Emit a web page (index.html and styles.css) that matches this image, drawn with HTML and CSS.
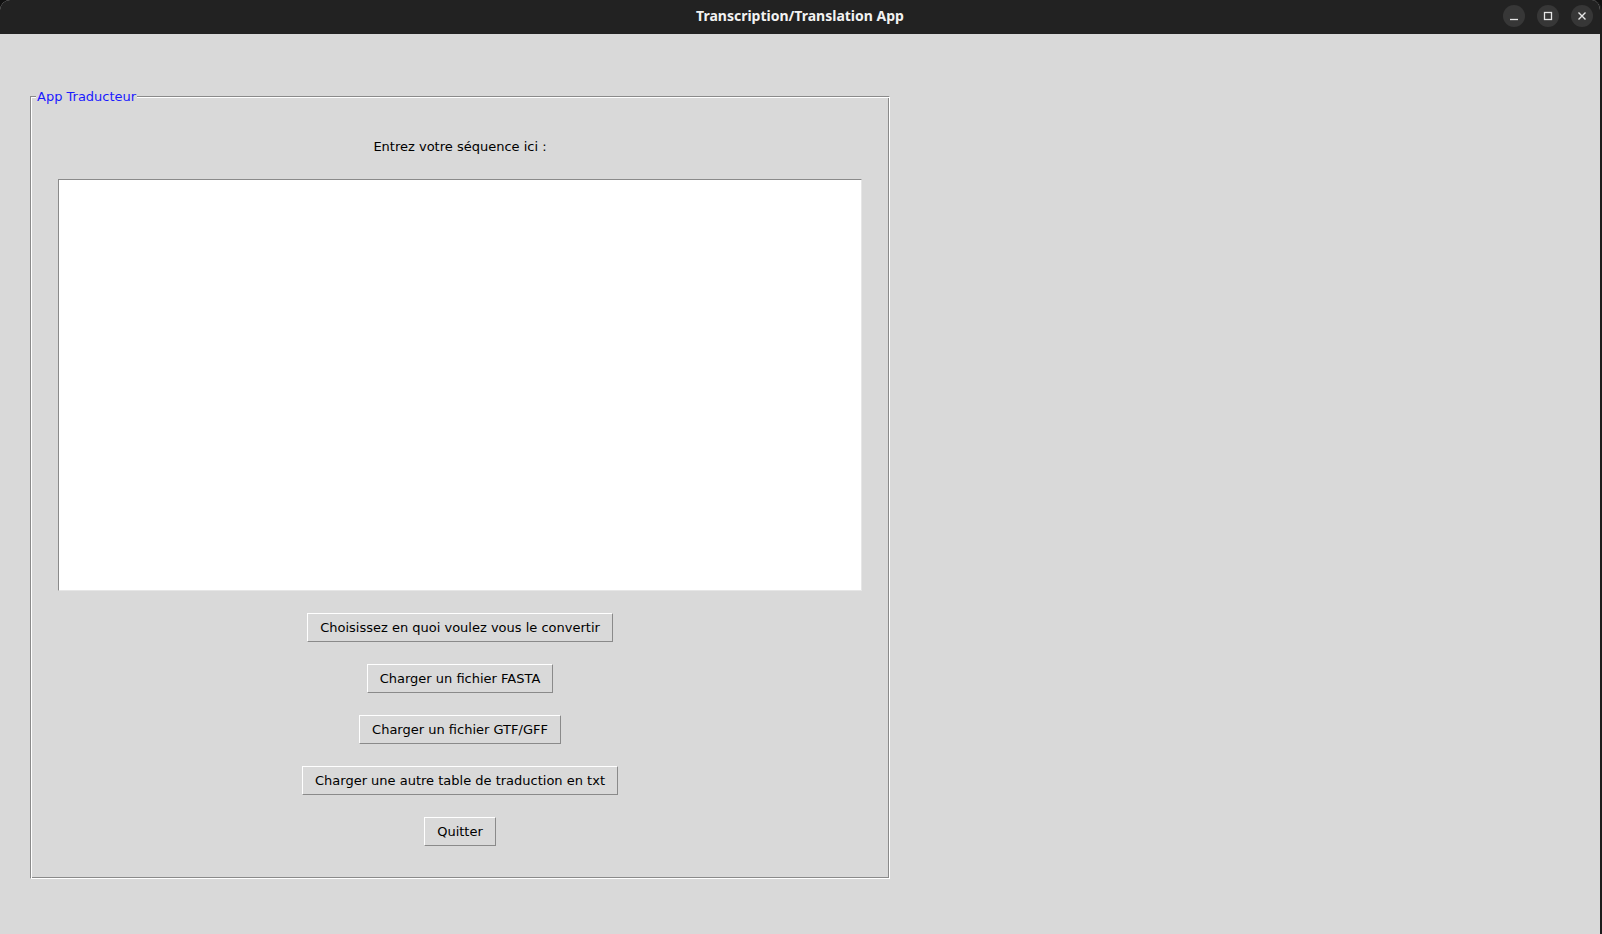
FILE: index.html
```html
<!DOCTYPE html>
<html lang="fr">
<head>
    <meta charset="UTF-8">
    <title>Transcription/Translation App</title>
    <link rel="stylesheet" href="styles.css">
</head>
<body>
    <div class="window">
        <div class="titlebar">
            <span class="title">Transcription/Translation App</span>
            <div class="controls">
                <span class="ctl">
                    <svg width="10" height="10" viewBox="0 0 10 10"><path d="M1 8.5h8" stroke="#e6e6e6" stroke-width="1.3"/></svg>
                </span>
                <span class="ctl">
                    <svg width="10" height="10" viewBox="0 0 10 10"><rect x="1.5" y="1.5" width="7" height="7" fill="none" stroke="#e6e6e6" stroke-width="1.3"/></svg>
                </span>
                <span class="ctl">
                    <svg width="10" height="10" viewBox="0 0 10 10"><path d="M1.5 1.5l7 7M8.5 1.5l-7 7" stroke="#e6e6e6" stroke-width="1.4"/></svg>
                </span>
            </div>
        </div>

        <div class="content">
            <fieldset class="frame">
                <legend>App Traducteur</legend>
                <div class="prompt">Entrez votre séquence ici :</div>
                <div class="textbox"></div>
                <button class="tk-btn">Choisissez en quoi voulez vous le convertir</button>
                <button class="tk-btn">Charger un fichier FASTA</button>
                <button class="tk-btn">Charger un fichier GTF/GFF</button>
                <button class="tk-btn">Charger une autre table de traduction en txt</button>
                <button class="tk-btn">Quitter</button>
            </fieldset>
        </div>
    </div>
</body>
</html>
```

FILE: styles.css
```css
:root {
    --tk-bg: #d9d9d9;
    --tk-dark: #8a8a8a;
    --tk-light: #ffffff;
    --title-bg: #222222;
}

html, body {
    margin: 0;
    height: 100%;
    background: #111;
}

.window {
    height: 934px;
    width: 1600px;
    border-right: 2px solid #1c1c1c;
    background: var(--tk-bg);
    border-radius: 10px 10px 0 0;
    overflow: hidden;
    font-family: "DejaVu Sans", sans-serif;
    font-size: 13px;
    color: #000;
}

.titlebar {
    box-sizing: border-box;
    height: 34px;
    padding-bottom: 3px;
    background: var(--title-bg);
    display: flex;
    align-items: center;
    justify-content: center;
    position: relative;
}

.title {
    color: #f2f2f2;
    font-family: "Noto Sans", "DejaVu Sans", sans-serif;
    font-weight: bold;
    font-size: 14px;
}

.controls {
    position: absolute;
    right: 7px;
    top: 5px;
    display: flex;
    gap: 12px;
}

.ctl {
    width: 22px;
    height: 22px;
    border-radius: 50%;
    background: #373737;
    display: flex;
    align-items: center;
    justify-content: center;
}

.content {
    padding: 55px 0 0 30px;
}

.frame {
    box-sizing: border-box;
    width: 860px;
    height: 790px;
    margin: 0;
    padding: 0;
    border: 1px solid;
    border-color: var(--tk-dark) var(--tk-light) var(--tk-light) var(--tk-dark);
    box-shadow: inset 1px 1px 0 var(--tk-light), inset -1px -1px 0 var(--tk-dark);
    display: flex;
    flex-direction: column;
    align-items: center;
}

.frame legend {
    color: #1a1aff;
    padding: 0 1px;
    margin-left: 5px;
    background: var(--tk-bg);
    line-height: 15px;
}

.prompt {
    margin-top: 35px;
    line-height: 16px;
}

.textbox {
    box-sizing: border-box;
    width: 804px;
    height: 412px;
    margin-top: 24px;
    background: #fff;
    border: 1px solid;
    border-color: var(--tk-dark) #e6e6e6 #e6e6e6 var(--tk-dark);
}

.tk-btn {
    box-sizing: border-box;
    height: 29px;
    margin-top: 22px;
    padding: 0 12px;
    background: var(--tk-bg);
    border: 1px solid;
    border-color: var(--tk-light) var(--tk-dark) var(--tk-dark) var(--tk-light);
    font-family: "DejaVu Sans", sans-serif;
    font-size: 13px;
    color: #000;
}
```
